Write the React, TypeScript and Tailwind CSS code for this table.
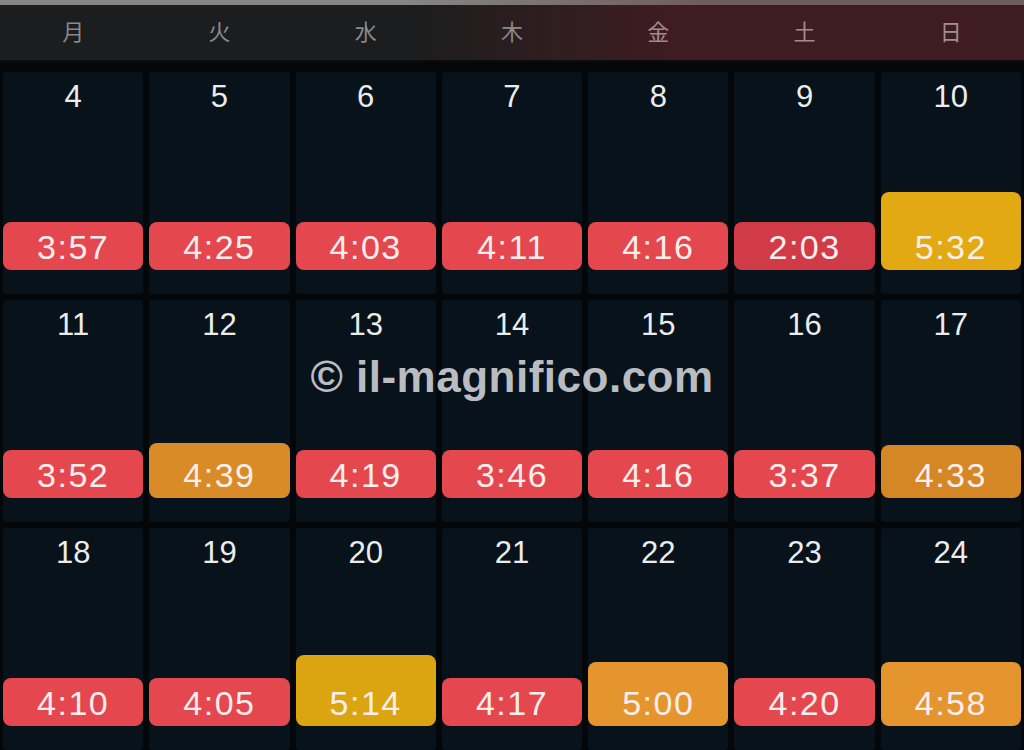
const days = ["月", "火", "水", "木", "金", "土", "日"];

type Entry = { day: number; time: string; color: string; h: string };

const red = "bg-[#e5474f]";

const weeks: Entry[][] = [
  [
    { day: 4, time: "3:57", color: red, h: "h-[48px]" },
    { day: 5, time: "4:25", color: red, h: "h-[48px]" },
    { day: 6, time: "4:03", color: red, h: "h-[48px]" },
    { day: 7, time: "4:11", color: red, h: "h-[48px]" },
    { day: 8, time: "4:16", color: red, h: "h-[48px]" },
    { day: 9, time: "2:03", color: "bg-[#d13b47]", h: "h-[48px]" },
    { day: 10, time: "5:32", color: "bg-[#e2a913]", h: "h-[78px]" },
  ],
  [
    { day: 11, time: "3:52", color: red, h: "h-[48px]" },
    { day: 12, time: "4:39", color: "bg-[#d98b27]", h: "h-[55px]" },
    { day: 13, time: "4:19", color: red, h: "h-[48px]" },
    { day: 14, time: "3:46", color: red, h: "h-[48px]" },
    { day: 15, time: "4:16", color: red, h: "h-[48px]" },
    { day: 16, time: "3:37", color: red, h: "h-[48px]" },
    { day: 17, time: "4:33", color: "bg-[#d48724]", h: "h-[53px]" },
  ],
  [
    { day: 18, time: "4:10", color: red, h: "h-[48px]" },
    { day: 19, time: "4:05", color: red, h: "h-[48px]" },
    { day: 20, time: "5:14", color: "bg-[#dba411]", h: "h-[71px]" },
    { day: 21, time: "4:17", color: red, h: "h-[48px]" },
    { day: 22, time: "5:00", color: "bg-[#e5952d]", h: "h-[64px]" },
    { day: 23, time: "4:20", color: red, h: "h-[48px]" },
    { day: 24, time: "4:58", color: "bg-[#e5952d]", h: "h-[64px]" },
  ],
];

function Cell({ e }: { e: Entry }) {
  return (
    <div className="h-[222px] bg-[#07121a] rounded-[3px] flex flex-col justify-between pt-[7px] pb-[24px]">
      <div className="text-center text-[31px] leading-[36px] text-[#ececec]">{e.day}</div>
      <div className={`${e.color} ${e.h} rounded-[8px] flex flex-col justify-end`}>
        <div className="h-[48px] flex items-center justify-center text-[34px] tracking-[1.5px] text-[#fdeeee] pt-[2px]">
          {e.time}
        </div>
      </div>
    </div>
  );
}

export default function App() {
  return (
    <div
      className="w-[1024px] h-[750px] overflow-hidden bg-[#03070a] relative"
      style={{ fontFamily: '"Liberation Sans", "Noto Sans CJK JP", sans-serif' }}
    >
      <div className="h-[5px] bg-gradient-to-r from-[#858585] from-40% to-[#6d5b5d] to-70%" />
      <div className="h-[55px] grid grid-cols-7 px-[3px] gap-[6px] bg-gradient-to-r from-[#1b1d1e] from-40% to-[#3e1c21] to-65%">
        {days.map((d, i) => (
          <div
            key={d}
            className={`flex items-center justify-center text-[22px] ${i >= 4 ? "text-[#a38c8e]" : "text-[#8a8a8a]"}`}
          >
            {d}
          </div>
        ))}
      </div>
      <div className="h-[2px] bg-[#0c0c0c]" />
      <div className="pt-[10px] px-[3px] grid grid-cols-7 gap-[6px]">
        {weeks.flat().map((e) => (
          <Cell key={e.day} e={e} />
        ))}
      </div>
      <div className="absolute left-0 right-0 top-[350px] text-center text-[44px] leading-[54px] font-bold text-[#b9bdc1] tracking-[0.5px]">
        © il-magnifico.com
      </div>
    </div>
  );
}
